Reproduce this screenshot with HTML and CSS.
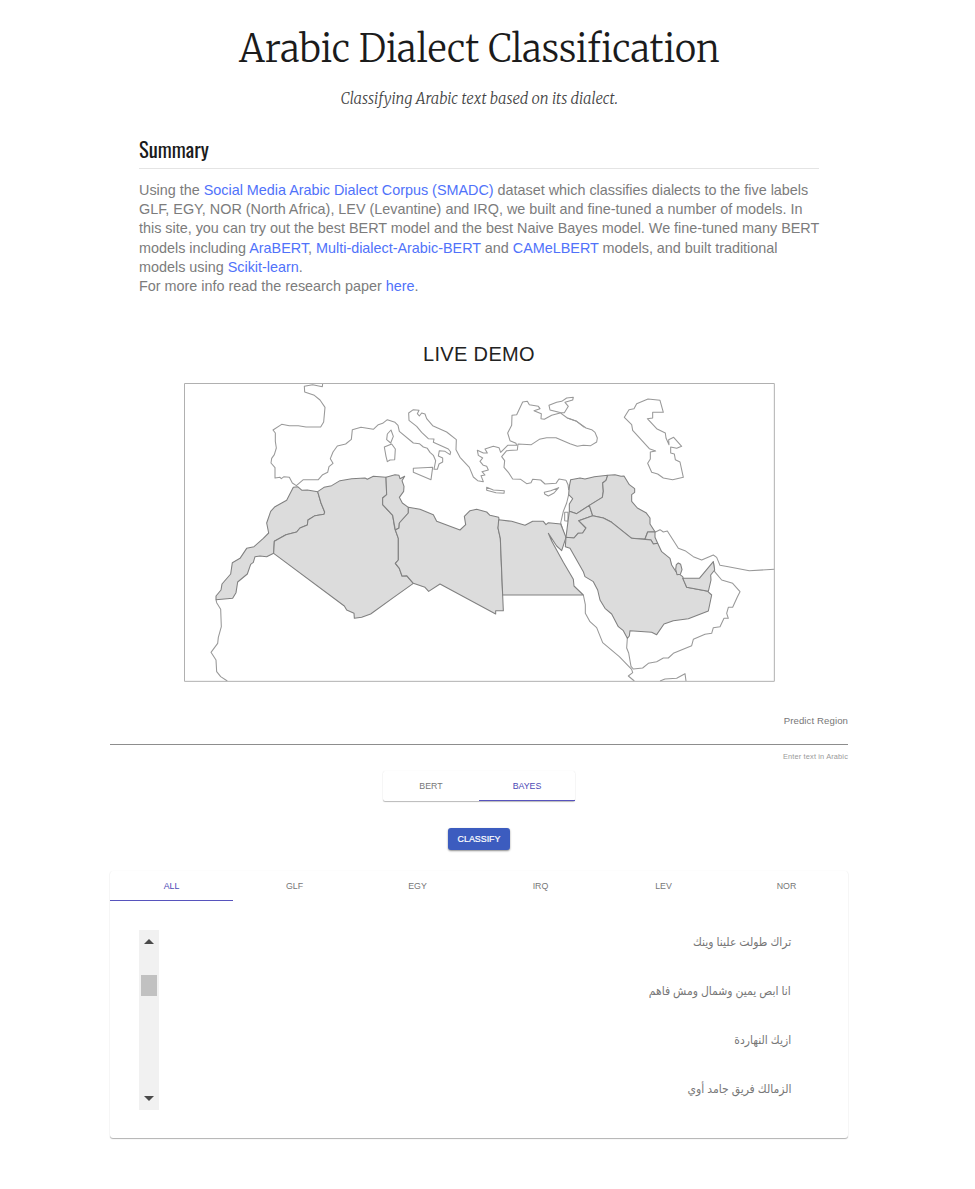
FILE: index.html
```html
<!DOCTYPE html>
<html lang="en">
<head>
<meta charset="utf-8">
<title>Arabic Dialect Classification</title>
<link rel="stylesheet" href="styles.css">
</head>
<body>
<main class="page">
  <header class="intro">
    <h1 class="title"><span>Arabic Dialect Classification</span></h1>
    <p class="subtitle"><span>Classifying Arabic text based on its dialect.</span></p>
  </header>
  <section class="summary">
    <h2 class="heading"><span>Summary</span></h2>
    <p class="copy">Using the <a>Social Media Arabic Dialect Corpus (SMADC)</a> dataset which classifies dialects to the five labels<br>GLF, EGY, NOR (North Africa), LEV (Levantine) and IRQ, we built and fine-tuned a number of models. In<br>this site, you can try out the best BERT model and the best Naive Bayes model. We fine-tuned many BERT<br>models including <a>AraBERT</a>, <a>Multi-dialect-Arabic-BERT</a> and <a>CAMeLBERT</a> models, and built traditional<br>models using <a>Scikit-learn</a>.<br>For more info read the research paper <a>here</a>.</p>
  </section>
  <section class="demo">
    <h3 class="demo-title">LIVE DEMO</h3>
    <svg class="map" viewBox="12 15 1773 897" aria-label="Map of the Arab world">
      <g class="coast">
        <!-- Iberia, France, Italy, Balkans, Greece -->
        <path d="M428 16L427 26 398 20 373 25 374 42 403 52 420 66 435 88 431 132 422 147 378 147 355 143 328 143 305 139 279 156 286 165 286 190 289 210 283 230 275 241 273 255 285 269 285 300 300 298 304 302 312 296 328 298 337 315 349 323 370 305 415 305 428 290 443 283 447 266 459 256 451 242 459 222 472 204 497 198 514 184 517 155 543 148 580 154 595 140 608 136 622 125 645 133 654 142 658 160 700 195 718 197 730 207 742 211 750 223 760 232 767 248 762 274 772 274 777 258 788 252 788 240 775 234 778 218 795 220 810 230 812 222 805 213 760 193 762 183 745 182 725 163 710 145 687 127 686 105 700 95 717 97 712 107 718 114 725 105 735 108 740 122 758 143 800 162 829 185 828 215 840 238 868 268 880 297 893 308 910 311 903 293 915 291 906 281 925 276 920 265 910 262 900 250 908 240 895 232 892 217 910 225 922 225 915 213 940 205 957 209 962 223 983 202 1010 202 1008 196 990 188 983 165 995 142 996 112 1010 110 1028 72 1042 70 1048 80 1075 85 1080 92 1062 98 1084 107 1083 122 1093 124 1115 112 1143 104 1110 96 1107 82 1130 73 1145 70 1160 60 1180 58 1178 66 1155 73 1165 85 1153 104 1140 104 1162 120 1190 130 1218 150 1235 155 1245 163 1252 180 1250 192 1232 203 1210 202 1192 205 1170 197 1128 179 1100 179 1078 184 1054 200 1014 198 1012 216 980 218 965 236 974 248 972 268 985 283 998 303 1022 304 1040 317 1053 314 1058 304 1082 306 1095 318 1128 316 1137 303 1158 307"/>
        <path d="M1162 120L1190 130 1213 148"/>
        <!-- Islands -->
        <path d="M633 156L640 175 632 195 620 185 622 168ZM613 207L635 198 646 213 644 245 630 246 622 251 618 235ZM700 271L758 268 753 305 700 283ZM920 328L940 336 973 338 972 346 948 344 920 337ZM1093 343L1112 338 1136 329 1122 345 1105 354 1094 348Z"/>
        <!-- Caspian Sea -->
        <path d="M1404 63L1440 67 1450 103 1418 103 1418 120 1402 122 1430 152 1456 165 1458 180 1467 200 1466 185 1481 178 1505 205 1490 211 1472 207 1472 225 1483 228 1486 245 1500 252 1510 298 1478 305 1450 300 1433 288 1415 283 1403 256 1411 243 1411 222 1427 219 1408 212 1358 157 1355 140 1333 118 1347 95 1362 92 1370 77Z"/>
        <!-- Levant coast -->
        <path d="M1158 307L1164 320 1166 335 1172 320 1172 305M1166 350L1160 375 1150 400 1142 435 1156 478M1154 403H1164V430L1154 428Z"/>
        <!-- Iran -->
        <path d="M1425 463L1440 455 1450 462 1462 459 1495 511 1515 518 1540 536 1565 546 1600 531 1610 538 1620 562 1645 566 1708 578 1783 574"/>
        <!-- Oman and Yemen -->
        <path d="M1600 551L1604 581 1625 606 1658 616 1680 641 1672 657 1658 688 1645 688 1640 706 1645 721 1632 721 1620 746 1600 749 1595 766 1575 769 1540 784 1535 803 1480 826 1465 840 1450 840 1430 851 1405 856 1388 870 1360 873 1353 865 1346 825 1340 810 1342 781"/>
        <!-- African coasts -->
        <path d="M1210 651L1216 680 1216 706 1230 731 1250 749 1268 794 1318 836 1355 874 1358 884 1345 894 1363 909M1440 909L1455 903 1490 901 1515 887 1518 909M108 665L110 674 122 694 124 746 115 778 113 796 93 823 108 846 110 881 122 896 142 909"/>
      </g>
      <g class="country">
        <!-- Morocco -->
        <path d="M340 328L353 326 366 337 382 336 413 341 423 375 434 402 432 409 405 413 384 426 382 441 360 450 350 462 318 470 283 490 281 526 260 536 240 534 225 536 220 553 212 559 202 588 173 612 168 644 158 661 108 665 108 654 123 636 126 618 152 588 157 554 180 541 200 511 222 506 250 481 266 465 260 435 272 400 285 386 320 367Z"/>
        <!-- Algeria -->
        <path d="M413 341L432 328 455 323 480 308 515 302 555 300 562 304 580 295 618 298 620 350 608 360 608 380 638 412 644 450 655 481 655 546 646 556 658 571 666 594 680 593 700 616 640 659 572 708 545 718 523 721 522 706 500 696 493 684 281 526 283 490 318 470 350 462 360 450 382 441 384 426 405 413 432 409 434 402 423 375Z"/>
        <!-- Tunisia -->
        <path d="M618 298L645 290 657 292 660 302 674 295 666 308 672 325 671 340 658 358 667 375 685 388 685 405 658 435 657 450 646 456 638 412 608 380 608 360 620 350Z"/>
        <!-- Libya -->
        <path d="M685 388L720 394 760 410 770 430 840 456 857 440 853 415 870 398 890 394 920 402 930 412 956 418 958 430 954 450 961 481 966 606 970 698 947 698 947 708 780 618 746 640 735 628 700 616 680 593 666 594 658 571 646 556 655 546 655 481 646 456 657 450 658 435 685 405Z"/>
        <!-- Egypt -->
        <path d="M956 425L995 430 1035 442 1058 430 1090 430 1098 440 1105 434 1142 438 1158 478 1145 518 1130 504 1105 466 1115 489 1150 553 1180 604 1182 624 1210 651 968 651 961 481 954 450Z"/>
        <!-- Syria -->
        <path d="M1172 305L1200 300 1215 303 1243 296 1283 292 1278 307 1268 315 1270 340 1267 358 1228 382 1190 407 1168 400 1168 378 1178 362 1166 350 1168 325Z"/>
        <!-- Jordan -->
        <path d="M1168 400L1190 407 1228 382 1238 413 1196 428 1218 450 1208 465 1194 466 1182 480 1158 478 1164 430Z"/>
        <!-- Iraq -->
        <path d="M1283 292L1305 290 1323 295 1332 294 1348 320 1364 332 1364 343 1355 350 1355 370 1372 390 1398 404 1410 420 1410 438 1425 461 1403 462 1395 483 1355 481 1295 433 1270 420 1238 413 1228 382 1267 358 1270 340 1268 315 1278 307Z"/>
        <!-- Kuwait -->
        <path d="M1403 462L1425 461 1425 478 1433 496 1420 498 1413 486 1395 483Z"/>
        <!-- Saudi Arabia -->
        <path d="M1158 478L1182 480 1194 466 1208 465 1218 450 1196 428 1238 413 1270 420 1295 433 1355 481 1413 486 1420 498 1433 496 1445 521 1470 541 1475 561 1488 581 1508 596 1520 628 1583 640 1595 651 1585 699 1525 722 1480 728 1452 738 1430 770 1415 763 1350 758 1348 774 1342 781 1330 758 1315 746 1295 708 1275 691 1260 666 1253 636 1240 611 1215 596 1210 581 1170 511 1156 506Z"/>
        <!-- UAE -->
        <path d="M1508 601H1558L1600 551 1604 576 1592 591 1593 606 1585 640 1520 628Z"/>
        <!-- Qatar -->
        <path d="M1495 555L1502 559 1506 575 1501 589 1491 590 1487 574 1489 560Z"/>
      </g>
      <path class="frame" d="M13.500 16.500H1783V910H13.500Z"/>
    </svg>
  </section>
  <section class="predict">
    <div class="field">Predict Region</div>
    <p class="hint">Enter text in Arabic</p>
    <div class="models">
      <div class="model">BERT</div>
      <div class="model active">BAYES</div>
    </div>
    <button class="classify">CLASSIFY</button>
  </section>
  <section class="examples">
    <nav class="tabs">
      <div class="tab active">ALL</div>
      <div class="tab">GLF</div>
      <div class="tab">EGY</div>
      <div class="tab">IRQ</div>
      <div class="tab">LEV</div>
      <div class="tab">NOR</div>
    </nav>
    <div class="list">
      <div class="scrollbar">
        <svg class="arrow" viewBox="0 0 10 5"><path d="M0 5L5 0 10 5Z"/></svg>
        <div class="thumb"></div>
        <svg class="arrow" viewBox="0 0 10 5"><path d="M0 0L5 5 10 0Z"/></svg>
      </div>
      <ul class="phrases" dir="rtl" lang="ar">
        <li><span>تراك طولت علينا وينك</span></li>
        <li><span>انا ابص يمين وشمال ومش فاهم</span></li>
        <li><span>ازيك النهاردة</span></li>
        <li><span>الزمالك فريق جامد أوي</span></li>
      </ul>
    </div>
  </section>
</main>
</body>
</html>
```
FILE: styles.css
```css
* { box-sizing: border-box; }
body { margin: 0; background: #fff; font-family: "Liberation Sans", Arial, sans-serif; color: #222; }
h1, h2, h3, p, ul { margin: 0; padding: 0; font-weight: 400; }
.page { width: 958px; height: 1189px; display: flex; flex-direction: column; align-items: center; }
.intro { height: 133px; padding-top: 21px; text-align: center; white-space: nowrap; }
.title { font: 300 37.6px/56px Merriweather, "Liberation Serif", serif; color: #1b1b1b; }
.title span { display: inline-block; transform: scaleX(.972); }
.subtitle { margin-top: 11px; font: italic 300 15.2px/22px Merriweather, "Liberation Serif", serif; color: #444; }
.subtitle span { display: inline-block; transform: scaleX(.976); }
.summary { width: 680px; }
.heading { height: 36px; border-bottom: 1px solid #e4e4e4; font: 400 20px/32px Oswald, "Liberation Sans Narrow", Roboto, sans-serif; color: #1b1b1b; }
.heading span { display: inline-block; transform-origin: left; transform: scaleX(1.03); }
.copy { margin-top: 12px; font-size: 14.4px; letter-spacing: -.01px; line-height: 19.2px; color: #7c7c7c; white-space: nowrap; }
.copy a { color: #5072fa; }
.demo { margin-top: 46px; display: flex; flex-direction: column; align-items: center; }
.demo-title { font-size: 20px; line-height: 24px; letter-spacing: .35px; }
.map { display: block; width: 591px; height: 299px; margin-top: 17px; }
.coast path { fill: none; stroke: #999; stroke-width: 3.2; stroke-linejoin: round; }
.country path { fill: #dcdcdc; stroke: #808080; stroke-width: 3.2; stroke-linejoin: round; }
.frame { fill: none; stroke: #b0b0b0; stroke-width: 3; }
.predict { width: 738px; display: flex; flex-direction: column; align-items: center; }
.field { width: 100%; height: 63px; padding-top: 33px; border-bottom: 1px solid #8d8d8d; text-align: right; font-size: 9.6px; letter-spacing: .1px; line-height: 12px; color: #777; }
.hint { width: 100%; padding-top: 7px; text-align: right; font-size: 7.4px; letter-spacing: .15px; line-height: 10px; color: #999; }
.models { display: flex; width: 192px; height: 30px; margin-top: 9px; border-radius: 2px; box-shadow: 0 1px 1px rgba(0,0,0,.27), 0 0 1px rgba(0,0,0,.1); }
.model { flex: 1; text-align: center; font-size: 8.8px; line-height: 30px; color: #777; }
.model.active, .tab.active { color: #4b49b5; border-bottom: 1px solid #5753bd; }
.classify { width: 62px; height: 22px; margin-top: 27px; padding: 0; border: 0; border-radius: 3px; background: #3c5cbf; color: #fff; font: 8.9px/20px "Liberation Sans", Arial, sans-serif; -webkit-text-stroke: .2px #fff; box-shadow: 0 1px 2px rgba(0,0,0,.45); }
.examples { width: 738px; height: 267px; margin-top: 21px; border-radius: 3px; box-shadow: 0 1px 1px rgba(0,0,0,.3), 0 0 1px rgba(0,0,0,.08); }
.tabs { display: flex; height: 30px; }
.tab { flex: 1; text-align: center; font-size: 8.8px; line-height: 31px; color: #777; }
.list { display: flex; height: 180px; margin-top: 29px; padding-left: 29px; padding-right: 57px; }
.scrollbar { width: 20px; height: 180px; padding: 9px 0; background: #f1f1f1; display: flex; flex-direction: column; align-items: center; }
.arrow { width: 10px; height: 5px; fill: #4a4a4a; }
.arrow:last-child { margin-top: auto; }
.thumb { width: 16px; height: 21px; margin-top: 31px; background: #c1c1c1; }
.phrases { flex: 1; list-style: none; font: 12px/49px "Liberation Sans", "DejaVu Sans", sans-serif; color: #777; margin-top: -12px; }
.phrases li { height: 49px; white-space: nowrap; }
.phrases span { display: inline-block; transform-origin: right; transform: scaleX(.9); }
```
